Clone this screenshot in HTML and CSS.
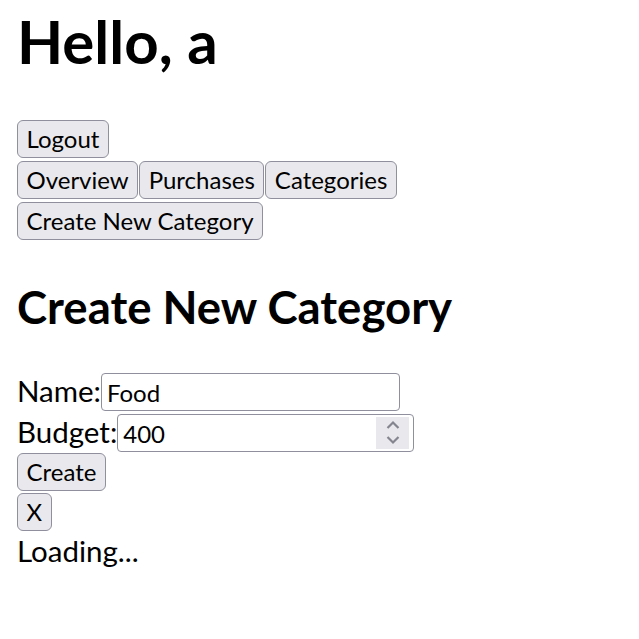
FILE: index.html
```html
<!DOCTYPE html>
<html>
<head>
<meta charset="utf-8">
<link rel="stylesheet" href="styles.css">
</head>
<body>
<h1 class="title">Hello, a</h1>
<div class="bar"><button class="btn">Logout</button></div>
<div class="bar"><button class="btn">Overview</button><button class="btn">Purchases</button><button class="btn">Categories</button></div>
<div class="bar"><button class="btn">Create New Category</button></div>
<h2 class="subtitle">Create New Category</h2>
<form class="form">
  <div class="field"><label class="label">Name:</label><input class="text-input" type="text" value="Food"></div>
  <div class="field field-tight"><label class="label">Budget:</label><span class="numbox"><input class="num-input" type="text" value="400"><span class="spin"><svg width="14" height="32" viewBox="0 0 14 32"><path d="M1.5 11 L7 5.5 L12.5 11" fill="none" stroke="#858590" stroke-width="2.2"/><path d="M1.5 20 L7 25.5 L12.5 20" fill="none" stroke="#858590" stroke-width="2.2"/></svg></span></span></div>
  <div class="bar form-bar"><button class="btn" type="button">Create</button></div>
  <div class="bar form-bar"><button class="btn" type="button">X</button></div>
</form>
<div class="status">Loading...</div>
</body>
</html>
```
FILE: styles.css
```css
* { box-sizing: border-box; }
body {
  margin: 0;
  padding: 0 17px;
  font-family: Lato, "Open Sans", sans-serif;
  font-size: 29.5px;
  color: #000;
  background: #fff;
}
.title {
  font-size: 60px;
  font-weight: 700;
  margin: 0 0 37px;
  height: 83px;
  line-height: 83px;
}
.bar {
  display: flex;
  margin-bottom: 3px;
}
.btn {
  font-family: inherit;
  font-size: 24px;
  height: 38px;
  padding: 0 8.5px 2px;
  background: #e9e9ed;
  border: 1px solid #8f8f9d;
  border-radius: 6px;
  color: #000;
  margin-right: 1px;
}
.subtitle {
  font-size: 45.5px;
  font-weight: 700;
  margin: 37px 0 36px;
  height: 60px;
  line-height: 60px;
}
.form { margin: 0; }
.field {
  display: flex;
  align-items: baseline;
  height: 41px;
}
.field-tight { height: 39px; }
.form-bar { height: 40px; margin-bottom: 0; }
.label { font-size: 29.5px; line-height: 1; }
.text-input, .numbox {
  height: 38px;
  border: 1px solid #8f8f9d;
  border-radius: 4px;
  background: #fff;
}
.text-input {
  width: 299px;
  font-family: inherit;
  font-size: 24px;
  color: #000;
  padding: 0 5px;
}
.numbox { display: flex; width: 297px; padding: 2px 4px 2px 2px; }
.num-input {
  flex: 1;
  min-width: 0;
  border: 0;
  font-family: inherit;
  font-size: 24px;
  color: #000;
  padding: 0 3px;
  outline: none;
  background: transparent;
}
.spin {
  width: 33px;
  background: #e9e9ed;
  display: flex;
  align-items: center;
  justify-content: center;
}
.status { font-size: 29.5px; line-height: 36px; }
```
